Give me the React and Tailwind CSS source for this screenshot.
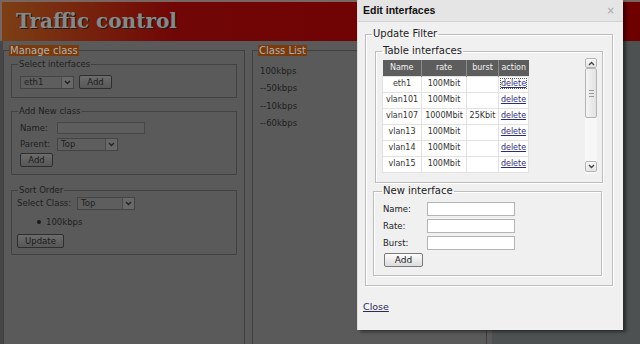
import React from "react";

const ifaces = [
  ["eth1", "100Mbit", ""],
  ["vlan101", "100Mbit", ""],
  ["vlan107", "1000Mbit", "25Kbit"],
  ["vlan13", "100Mbit", ""],
  ["vlan14", "100Mbit", ""],
  ["vlan15", "100Mbit", ""],
];

const classes = ["100kbps", "--50kbps", "--10kbps", "--60kbps"];

function Chevron({ up = false, color = "#222" }) {
  return (
    <svg width="7" height="5" viewBox="0 0 7 5">
      <polyline
        points={up ? "1,4 3.5,1.5 6,4" : "1,1 3.5,3.5 6,1"}
        fill="none"
        stroke={color}
        strokeWidth="1.4"
      />
    </svg>
  );
}

// dimmed select that sits under the modal overlay
function DimSelect({ value, width }) {
  return (
    <div className={`flex h-[13px] items-center border border-[#444] bg-[#5e5e5e] ${width}`}>
      <span className="flex-1 pl-[3px] text-[8.5px] leading-none">{value}</span>
      <span className="flex h-full w-[12px] items-center justify-center rounded-[1px] border-l border-[#4a4a4a] bg-[#686868]">
        <Chevron />
      </span>
    </div>
  );
}

function DimButton({ children, className = "" }) {
  return (
    <button
      type="button"
      className={`flex h-[14px] items-center justify-center rounded-[2px] border border-[#2e2e2e] bg-[linear-gradient(#6c6c6c,#575757)] text-[8.5px] leading-none text-[#1a1a1a] ${className}`}
    >
      {children}
    </button>
  );
}

function DimLegend({ children }) {
  return (
    <legend className="ml-[5px] bg-[#7a3a0c] px-[1px] text-[10px] leading-[11px] text-[#b0b0b0]">
      {children}
    </legend>
  );
}

function InnerLegend({ children }) {
  return <legend className="ml-[6px] px-[1px] text-[8.5px] leading-[12px] text-[#1e1e1e]">{children}</legend>;
}

function Legend({ children, className = "" }) {
  return <legend className={`px-[1px] text-[10px] leading-[14px] text-[#222] ${className}`}>{children}</legend>;
}

function Scrollbar() {
  return (
    <div className="flex h-[116px] w-[12px] flex-col bg-[#f7f7f7]">
      <div className="flex h-[10px] items-center justify-center rounded-[2px] border border-[#b5b5b5] bg-[linear-gradient(#fafafa,#e4e4e4)]">
        <Chevron up color="#444" />
      </div>
      <div className="flex h-[50px] flex-col items-center justify-center gap-[2px] rounded-[2px] border border-[#b5b5b5] bg-[linear-gradient(90deg,#f4f4f4,#e2e2e2)]">
        <span className="h-px w-[5px] bg-[#999]" />
        <span className="h-px w-[5px] bg-[#999]" />
        <span className="h-px w-[5px] bg-[#999]" />
      </div>
      <div className="flex-1" />
      <div className="mb-[2px] flex h-[11px] items-center justify-center rounded-[2px] border border-[#b5b5b5] bg-[linear-gradient(#fafafa,#e4e4e4)]">
        <Chevron color="#444" />
      </div>
    </div>
  );
}

function Field({ label }) {
  return (
    <div className="flex items-center">
      <span className="w-[44px] text-[8.5px] leading-none text-[#222]">{label}</span>
      <input className="h-[14px] w-[88px] border border-[#b4b4b4] bg-white outline-none" />
    </div>
  );
}

export default function App() {
  return (
    <div className="relative h-[344px] w-[640px] overflow-hidden bg-[#4d5151] font-['DejaVu_Sans',sans-serif] text-[#1e1e1e]">
      <header className="flex h-[41px] items-center border-l-2 border-t-2 border-[#7a6660] bg-[linear-gradient(90deg,#7c3f15_0px,#710606_170px,#6e0000_100%)] pb-[2px] pl-[14px]">
        <h1 className="font-['DejaVu_Serif',serif] text-[20px] font-bold leading-none text-[#888] [text-shadow:1px_1px_0_#1c1c1c]">
          Traffic control
        </h1>
      </header>

      <main className="flex h-[303px] w-[492px] gap-[7px] border-l-[3px] border-[#464646] bg-[#5a5a5a]">
        <fieldset className="mt-[4px] h-[320px] w-[242px] shrink-0 border border-[#404040]">
          <DimLegend>Manage class</DimLegend>

          <fieldset className="ml-[7px] mt-[2px] w-[226px] border border-[#424242]">
            <InnerLegend>Select interfaces</InnerLegend>
            <div className="flex items-center gap-[5px] px-[8px] pb-[8px] pt-[5px]">
              <DimSelect value="eth1" width="w-[54px]" />
              <DimButton className="w-[33px]">Add</DimButton>
            </div>
          </fieldset>

          <fieldset className="ml-[7px] mt-[7px] w-[226px] border border-[#424242]">
            <InnerLegend>Add New class</InnerLegend>
            <div className="px-[8px] pb-[7px] pt-[5px]">
              <div className="flex h-[12px] items-center">
                <span className="w-[37px] text-[8.5px] leading-none">Name:</span>
                <div className="h-[12px] w-[88px] border border-[#474747] bg-[#5e5e5e]" />
              </div>
              <div className="mt-[4px] flex h-[12px] items-center">
                <span className="w-[37px] text-[8.5px] leading-none">Parent:</span>
                <DimSelect value="Top" width="w-[61px]" />
              </div>
              <DimButton className="mt-[3px] w-[33px]">Add</DimButton>
            </div>
          </fieldset>

          <fieldset className="ml-[7px] mt-[9px] w-[226px] border border-[#424242]">
            <InnerLegend>Sort Order</InnerLegend>
            <div className="px-[5px] pb-[6px] pt-[1px]">
              <div className="flex h-[12px] items-center">
                <span className="w-[60px] text-[8.5px] leading-none">Select Class:</span>
                <DimSelect value="Top" width="w-[58px]" />
              </div>
              <div className="mt-[8px] flex h-[10px] items-center pl-[20px]">
                <span className="h-[4px] w-[4px] rounded-full bg-[#1a1a1a]" />
                <span className="pl-[5px] text-[8.5px] leading-none">100kbps</span>
              </div>
              <DimButton className="mt-[7px] w-[47px]">Update</DimButton>
            </div>
          </fieldset>
        </fieldset>

        <fieldset className="mt-[4px] h-[320px] w-[235px] border border-[#404040]">
          <DimLegend>Class List</DimLegend>
          <div className="pl-[7px] pt-[7px]">
            {classes.map((c) => (
              <div key={c} className="h-[17.3px] text-[8.5px] leading-[17px]">
                {c}
              </div>
            ))}
          </div>
        </fieldset>
      </main>

      <div className="absolute left-[357px] top-0 h-[330px] w-[266px] border-l border-[#dcdcdc] bg-[#f0f0f0] shadow-[3px_2px_3px_rgba(0,0,0,0.45)]">
        <div className="flex h-[22px] items-center justify-between border-b border-[#d2d2d2] bg-[#e5e5e5] pl-[5px] pr-[8px]">
          <span className="font-['Liberation_Sans',sans-serif] text-[10.5px] font-bold leading-none text-[#111]">
            Edit interfaces
          </span>
          <span className="text-[10px] leading-none text-[#a8a8a8]">×</span>
        </div>

        <fieldset className="ml-[7px] mt-[5px] w-[248px] border border-[#bdbdbd] pb-[9px] shadow-[inset_1px_1px_0_#fff,1px_1px_0_#fff]">
          <Legend className="ml-[6px]">Update Filter</Legend>

          <fieldset className="ml-[9px] mt-[3px] w-[228px] border border-[#bdbdbd] pb-[7px] shadow-[inset_1px_1px_0_#fff,1px_1px_0_#fff]">
            <Legend className="ml-[6px]">Table interfaces</Legend>
            <div className="flex h-[117px] overflow-hidden">
              <div className="pl-[6px] pt-[2px]">
                <table className="border-collapse text-center text-[8px] leading-none">
                  <thead>
                    <tr className="h-[16px] bg-[#5d5d5d] text-[#f2f2f2]">
                      <th className="w-[39px] border-r border-[#8a8a8a] font-normal">Name</th>
                      <th className="w-[45px] border-r border-[#8a8a8a] font-normal">rate</th>
                      <th className="w-[32px] border-r border-[#8a8a8a] font-normal">burst</th>
                      <th className="w-[30px] font-normal">action</th>
                    </tr>
                  </thead>
                  <tbody className="bg-white text-[#333]">
                    {ifaces.map(([name, rate, burst], i) => (
                      <tr key={name} className="h-[16px]">
                        <td className="border border-[#e2e2e2]">{name}</td>
                        <td className="border border-[#e2e2e2]">{rate}</td>
                        <td className="border border-[#e2e2e2]">{burst}</td>
                        <td className="border border-[#e2e2e2]">
                          <a
                            href="#"
                            className={`text-[#2c2c78] underline ${i === 0 ? "outline-1 outline-dotted outline-[#555]" : ""}`}
                          >
                            delete
                          </a>
                        </td>
                      </tr>
                    ))}
                  </tbody>
                </table>
              </div>
              <div className="ml-auto mr-[5px]">
                <Scrollbar />
              </div>
            </div>
          </fieldset>

          <fieldset className="ml-[7px] mt-[1px] w-[229px] border border-[#bdbdbd] shadow-[inset_1px_1px_0_#fff,1px_1px_0_#fff]">
            <Legend className="ml-[8px]">New interface</Legend>
            <div className="pb-[8px] pl-[9px] pt-[4px]">
              <div className="flex flex-col gap-[3px]">
                <Field label="Name:" />
                <Field label="Rate:" />
                <Field label="Burst:" />
              </div>
              <button
                type="button"
                className="ml-px mt-[3px] flex h-[14px] w-[39px] items-center justify-center rounded-[2px] border border-[#7a7a7a] bg-[linear-gradient(#fdfdfd,#dcdcdc)] text-[9px] leading-none text-[#222]"
              >
                Add
              </button>
            </div>
          </fieldset>
        </fieldset>

        <a href="#" className="ml-[5px] mt-[15px] block w-fit text-[9.5px] leading-[12px] text-[#2b2b5c] underline">
          Close
        </a>
      </div>
    </div>
  );
}
